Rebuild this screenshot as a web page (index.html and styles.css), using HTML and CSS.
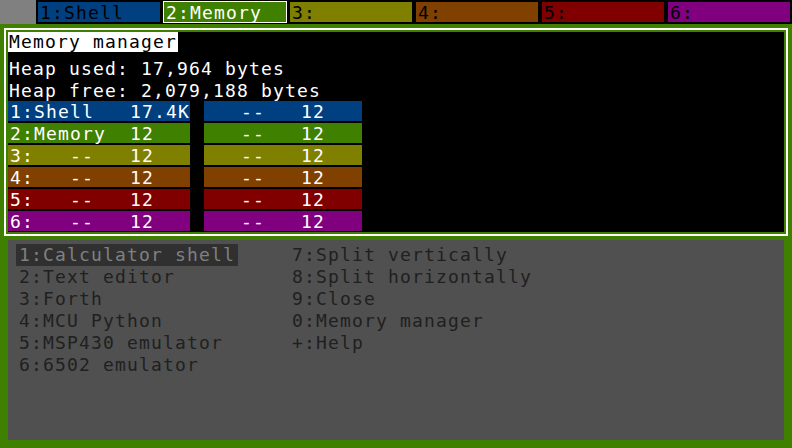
FILE: index.html
```html
<!DOCTYPE html>
<html>
<head>
<meta charset="utf-8">
<link rel="stylesheet" href="styles.css">
</head>
<body>
<div class="screen">
  <div class="tabbar">
    <div class="corner"></div>
    <div class="tab c1">1:Shell</div>
    <div class="tab c2 active">2:Memory</div>
    <div class="tab c3">3:</div>
    <div class="tab c4">4:</div>
    <div class="tab c5">5:</div>
    <div class="tab c6">6:</div>
  </div>
  <div class="desk">
    <section class="win mem">
      <div class="title">Memory manager</div>
      <div class="lines">
        <div class="line">Heap used: 17,964 bytes</div>
        <div class="line">Heap free: 2,079,188 bytes</div>
      </div>
      <div class="table">
        <div class="row c1"><span class="left">1:Shell   17.4K</span><span class="right">   --   12</span></div>
        <div class="row c2"><span class="left">2:Memory  12</span><span class="right">   --   12</span></div>
        <div class="row c3"><span class="left">3:   --   12</span><span class="right">   --   12</span></div>
        <div class="row c4"><span class="left">4:   --   12</span><span class="right">   --   12</span></div>
        <div class="row c5"><span class="left">5:   --   12</span><span class="right">   --   12</span></div>
        <div class="row c6"><span class="left">6:   --   12</span><span class="right">   --   12</span></div>
      </div>
    </section>
    <section class="win menu">
      <ul class="col first">
        <li class="sel">1:Calculator shell</li>
        <li>2:Text editor</li>
        <li>3:Forth</li>
        <li>4:MCU Python</li>
        <li>5:MSP430 emulator</li>
        <li>6:6502 emulator</li>
      </ul>
      <ul class="col">
        <li>7:Split vertically</li>
        <li>8:Split horizontally</li>
        <li>9:Close</li>
        <li>0:Memory manager</li>
        <li>+:Help</li>
      </ul>
    </section>
  </div>
</div>
</body>
</html>
```
FILE: styles.css
```css
* { box-sizing: border-box; }
html, body { margin: 0; padding: 0; }
body {
  background: #408000;
  font-family: "DejaVu Sans Mono", monospace;
  font-size: 18px;
  letter-spacing: 1.163px;
}
.screen { width: 792px; height: 448px; overflow: hidden; }
.tab, .title, .line, .row span, .col li { white-space: pre; }

.tabbar {
  height: 24px;
  background: #000;
  display: flex;
  align-items: center;
  gap: 4px;
}
.corner { width: 36px; height: 24px; background: #808080; margin-right: -2px; }
.tab {
  width: 122px;
  height: 20px;
  line-height: 21px;
  padding-left: 2px;
  color: #000;
}
.tab.active { color: #fff; box-shadow: 0 0 0 1px #fff; }

.c1 { background: #004080; }
.c2 { background: #408000; }
.c3 { background: #808000; }
.c4 { background: #804000; }
.c5 { background: #800000; }
.c6 { background: #800080; }

.desk {
  padding: 8px;
  display: flex;
  flex-direction: column;
  gap: 8px;
}
.win { height: 200px; }
.mem {
  background: #000;
  color: #fff;
  outline: 2px solid #fff;
  outline-offset: 2px;
}
.title {
  display: inline-block;
  background: #fff;
  color: #000;
  height: 20px;
  line-height: 20px;
  padding: 0 1px;
  vertical-align: top;
}
.lines { padding: 6px 0 0 1px; }
.line { height: 22px; line-height: 20px; }
.table { display: flex; flex-direction: column; gap: 2px; margin-top: -2px; }
.row { display: flex; height: 20px; line-height: 21px; background: none; }
.row .left { width: 182px; padding-left: 2px; }
.row .right { width: 158px; margin-left: 14px; padding-left: 1px; }
.row.c1 span { background: #004080; }
.row.c2 span { background: #408000; }
.row.c3 span { background: #808000; }
.row.c4 span { background: #804000; }
.row.c5 span { background: #800000; }
.row.c6 span { background: #800080; }

.menu {
  background: #505050;
  color: #202020;
  display: grid;
  grid-template-columns: 273px auto;
  align-content: start;
  padding: 4px 0 0 8px;
}
.col { list-style: none; margin: 0; padding: 0; }
.col li { height: 22px; line-height: 22px; padding: 0 3px; }
.col.first li { width: 222px; }
.col li.sel { background: #303030; color: #808080; }
```
